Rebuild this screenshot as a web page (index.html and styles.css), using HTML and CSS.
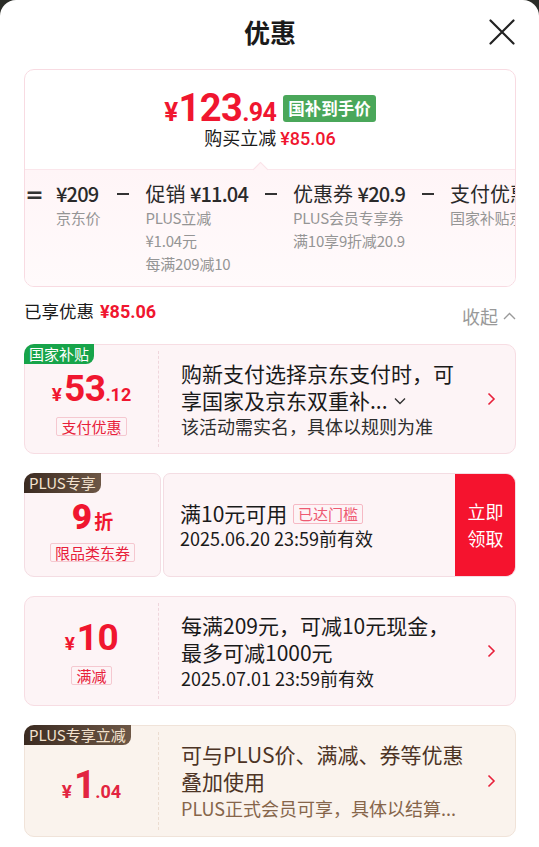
FILE: index.html
```html
<!DOCTYPE html>
<html lang="zh-CN">
<head>
<meta charset="utf-8">
<title>优惠</title>
<link rel="stylesheet" href="styles.css">
</head>
<body>
<div class="sheet">
  <header class="hd">
    <span></span>
    <h1 class="title">优惠</h1>
    <svg class="close" width="26" height="26" viewBox="0 0 26 26"><path d="M1.5 1.5L24.5 24.5M24.5 1.5L1.5 24.5" stroke="#222" stroke-width="2.2" stroke-linecap="round"/></svg>
  </header>

  <section class="summary">
    <div class="sum-top">
      <div class="price-line">
        <span class="price"><span class="p-yen">¥</span><span class="p-int">123</span><span class="p-dec">.94</span></span>
        <span class="gtag">国补到手价</span>
      </div>
      <div class="save">购买立减 <span class="save-amt">¥85.06</span></div>
    </div>
    <div class="sum-bot">
      <span class="notch"></span>
      <div class="calc">
        <span class="op op-eq">=</span>
        <div class="term">
          <div class="t-main"><span class="num">¥209</span></div>
          <div class="t-sub">京东价</div>
        </div>
        <span class="op"><i class="minus"></i></span>
        <div class="term">
          <div class="t-main">促销 <span class="num">¥11.04</span></div>
          <div class="t-sub">PLUS立减</div>
          <div class="t-sub">¥1.04元</div>
          <div class="t-sub">每满209减10</div>
        </div>
        <span class="op"><i class="minus"></i></span>
        <div class="term">
          <div class="t-main">优惠券 <span class="num">¥20.9</span></div>
          <div class="t-sub">PLUS会员专享券</div>
          <div class="t-sub">满10享9折减20.9</div>
        </div>
        <span class="op"><i class="minus"></i></span>
        <div class="term">
          <div class="t-main">支付优惠 <span class="num">¥53.12</span></div>
          <div class="t-sub">国家补贴京东支付</div>
        </div>
      </div>
    </div>
  </section>

  <div class="enjoy">
    <div class="enjoy-l">已享优惠 <span class="enjoy-amt">¥85.06</span></div>
    <div class="enjoy-r">收起 <svg width="13" height="8" viewBox="0 0 13 8"><path d="M1 7L6.5 1.5L12 7" fill="none" stroke="#9a9a9a" stroke-width="1.4"/></svg></div>
  </div>

  <div class="list">
    <div class="card">
      <span class="badge green">国家补贴</span>
      <div class="c-left">
        <div class="amt"><span class="a-yen">¥</span><span class="a-int">53</span><span class="a-dec">.12</span></div>
        <span class="ltag">支付优惠</span>
      </div>
      <div class="c-right">
        <div class="c-text">
          <div class="l-main">购新支付选择京东支付时，可</div>
          <div class="l-main">享国家及京东双重补... <svg class="more" width="12" height="8" viewBox="0 0 12 8"><path d="M1 1.5L6 6.5L11 1.5" fill="none" stroke="#333" stroke-width="1.4"/></svg></div>
          <div class="l-sub">该活动需实名，具体以规则为准</div>
        </div>
        <svg class="chev" width="9" height="14" viewBox="0 0 9 14"><path d="M1.5 1.5L7 7L1.5 12.5" fill="none" stroke="#e8203a" stroke-width="1.6"/></svg>
      </div>
    </div>

    <div class="ticket">
      <div class="t-left">
        <span class="badge plus">PLUS专享</span>
        <div class="amt zhe"><span class="z-int">9</span><span class="z-unit">折</span></div>
        <span class="ltag">限品类东券</span>
      </div>
      <div class="t-right">
        <div class="t-body">
          <div class="l-main">满10元可用 <span class="reach">已达门槛</span></div>
          <div class="l-date">2025.06.20 23:59前有效</div>
        </div>
        <div class="btn">立即<br>领取</div>
      </div>
    </div>

    <div class="card">
      <div class="c-left nobadge">
        <div class="amt"><span class="a-yen">¥</span><span class="a-int">10</span></div>
        <span class="ltag">满减</span>
      </div>
      <div class="c-right">
        <div class="c-text">
          <div class="l-main">每满209元，可减10元现金，</div>
          <div class="l-main">最多可减1000元</div>
          <div class="l-date">2025.07.01 23:59前有效</div>
        </div>
        <svg class="chev" width="9" height="14" viewBox="0 0 9 14"><path d="M1.5 1.5L7 7L1.5 12.5" fill="none" stroke="#e8203a" stroke-width="1.6"/></svg>
      </div>
    </div>

    <div class="card plus-card">
      <span class="badge plus">PLUS专享立减</span>
      <div class="c-left">
        <div class="amt plus-amt"><span class="a-yen">¥</span><span class="a-int">1</span><span class="a-dec">.04</span></div>
      </div>
      <div class="c-right">
        <div class="c-text">
          <div class="l-main">可与PLUS价、满减、券等优惠</div>
          <div class="l-main">叠加使用</div>
          <div class="l-sub">PLUS正式会员可享，具体以结算...</div>
        </div>
        <svg class="chev" width="9" height="14" viewBox="0 0 9 14"><path d="M1.5 1.5L7 7L1.5 12.5" fill="none" stroke="#e8203a" stroke-width="1.6"/></svg>
      </div>
    </div>
  </div>
</div>
</body>
</html>
```

FILE: styles.css
```css
* { box-sizing: border-box; }
html, body { margin: 0; padding: 0; }
body {
  background: #2a2c27;
  font-family: "Noto Sans CJK SC", "Noto Sans", sans-serif;
  color: #1a1a1a;
}
.sheet {
  background: #fff;
  border-radius: 16px 16px 0 0;
  height: 847px;
  padding: 0 23px 0 24px;
  overflow: hidden;
}

/* header */
.hd {
  display: grid;
  grid-template-columns: 1fr auto 1fr;
  align-items: center;
  height: 64px;
}
.title {
  margin: 0;
  font-size: 26px;
  font-weight: 700;
  line-height: 36px;
  color: #1a1a1a;
}
.close { justify-self: end; margin-right: 1px; margin-bottom: 1px; }

/* summary */
.summary {
  margin-top: 5px;
  border: 1px solid #f8dbe2;
  border-radius: 10px;
  overflow: hidden;
}
.sum-top {
  height: 99px;
  padding-top: 18px;
  display: flex;
  flex-direction: column;
  align-items: center;
}
.price-line {
  display: flex;
  align-items: center;
  height: 40px;
  margin-left: 0;
}
.price {
  font-family: Roboto, "Noto Sans", sans-serif;
  font-weight: 700;
  color: #f0162f;
  display: flex;
  align-items: baseline;
  letter-spacing: -0.6px;
}
.p-yen { font-size: 26px; margin-right: 1px; }
.p-int { font-size: 38px; line-height: 40px; }
.p-dec { font-size: 25px; }
.gtag {
  margin-left: 7px;
  background: #4aa75a;
  color: #fff;
  font-size: 16.5px;
  font-weight: 700;
  height: 27px;
  line-height: 27px;
  padding: 0 5px;
  border-radius: 3px;
}
.save {
  margin-top: -2px;
  font-size: 18px;
  line-height: 23px;
  color: #1a1a1a;
}
.save-amt {
  color: #f0162f;
  font-family: Roboto, "Noto Sans", sans-serif;
  font-weight: 500;
  font-size: 18px;
}

.sum-bot {
  position: relative;
  border-top: 1px solid #fbe6eb;
  background: linear-gradient(180deg, #fff5f7 0%, #fffafb 100%);
  height: 117px;
}
.notch {
  position: absolute;
  left: 230px;
  top: -6px;
  width: 11px;
  height: 11px;
  background: #fff5f7;
  border-top: 1px solid #fbe2e8;
  border-left: 1px solid #fbe2e8;
  transform: rotate(45deg);
}
.calc {
  display: flex;
  align-items: flex-start;
  padding: 12px 0 0 4px;
  white-space: nowrap;
}
.op {
  flex: none;
  width: 12px;
  height: 24px;
  display: flex;
  align-items: center;
  justify-content: center;
  margin: 0 16px 0 17px;
  color: #333;
}
.op-eq {
  margin-left: 0;
  width: 11px;
  font-size: 22px;
  font-weight: 700;
  font-family: "DejaVu Sans", sans-serif;
  margin-right: 16px;
}
.minus {
  display: block;
  width: 12px;
  height: 2.4px;
  background: #333;
}
.term { flex: none; }
.t-main {
  font-size: 20px;
  line-height: 24px;
  color: #2a2a2a;
}
.num {
  font-family: "Noto Sans CJK SC", "Noto Sans", sans-serif;
  font-weight: 500;
  font-size: 20px;
  letter-spacing: -0.8px;
}
.t-sub {
  font-size: 15px;
  line-height: 23px;
  color: #959595;
  letter-spacing: -0.2px;
}

/* enjoyed row */
.enjoy {
  display: flex;
  justify-content: space-between;
  align-items: flex-start;
  margin-top: 11px;
  height: 28px;
}
.enjoy-l {
  font-size: 17.5px;
  line-height: 26px;
  color: #1a1a1a;
}
.enjoy-amt {
  color: #f0162f;
  font-family: Roboto, "Noto Sans", sans-serif;
  font-weight: 700;
  font-size: 18px;
  margin-left: 2px;
}
.enjoy-r {
  margin-top: 5px;
  font-size: 18px;
  line-height: 26px;
  color: #999;
  display: flex;
  align-items: center;
  gap: 5px;
}

/* list */
.list {
  display: flex;
  flex-direction: column;
  gap: 19px;
  margin-top: 18px;
}
.card {
  position: relative;
  display: flex;
  height: 110px;
  border: 1px solid #f7dde3;
  border-radius: 10px;
  background: #fdf4f6;
}
.badge {
  position: absolute;
  left: -1px;
  top: -1px;
  height: 20px;
  line-height: 20px;
  padding: 0 5px;
  font-size: 15px;
  color: #fff;
  border-radius: 10px 0 8px 0;
  white-space: nowrap;
}
.badge.green { background: #17a44a; }
.badge.plus {
  background: linear-gradient(90deg, #3b2b21 0%, #6d5746 100%);
  color: #f4e3cf;
}
.c-left {
  flex: none;
  width: 133px;
  display: flex;
  flex-direction: column;
  align-items: center;
  justify-content: center;
  padding-top: 6px;
}
.c-left.nobadge { padding-top: 0; }
.amt {
  display: flex;
  align-items: baseline;
  color: #f0162f;
  font-family: Roboto, "Noto Sans", sans-serif;
  font-weight: 700;
  line-height: 40px;
}
.a-yen { font-size: 19px; margin-right: 2px; }
.a-int { font-size: 37px; letter-spacing: -0.5px; }
.a-dec { font-size: 18px; }
.ltag {
  margin-top: 2px;
  font-size: 15px;
  line-height: 17px;
  color: #e8203a;
  border: 1px solid #f5c8d0;
  border-radius: 2px;
  padding: 0 4px;
}
.c-right {
  flex: 1;
  display: flex;
  align-items: center;
  margin: 6px 0;
  border-left: 1px dashed #efd6dc;
  padding: 0 19px 0 22px;
}
.c-text { flex: 1; }
.l-main {
  font-size: 21px;
  line-height: 27px;
  color: #1a1a1a;
  white-space: nowrap;
}
.more { margin-left: 2px; vertical-align: middle; position: relative; top: -2px; }
.l-sub {
  font-size: 18px;
  line-height: 25px;
  color: #2e2e2e;
  white-space: nowrap;
}
.l-date {
  font-size: 18px;
  line-height: 25px;
  color: #1a1a1a;
  white-space: nowrap;
}
.chev { flex: none; }

/* ticket */
.ticket {
  display: flex;
  gap: 2px;
  height: 104px;
}
.t-left {
  position: relative;
  flex: none;
  width: 137px;
  border: 1px solid #f4dde3;
  border-radius: 10px 7px 7px 10px;
  background: #fdf4f6;
  display: flex;
  flex-direction: column;
  align-items: center;
  justify-content: center;
  padding-top: 12px;
}
.zhe { line-height: 34px; }
.z-int { font-size: 35px; font-weight: 900; }
.z-unit { font-size: 19px; font-weight: 700; font-family: "Noto Sans CJK SC", sans-serif; margin-left: 2px; }
.t-left .ltag { margin-top: 5px; }
.t-right {
  flex: 1;
  display: flex;
  border: 1px solid #f4dde3;
  border-radius: 7px 10px 10px 7px;
  background: #fdf4f6;
  overflow: hidden;
}
.t-body {
  flex: 1;
  padding-left: 16px;
  display: flex;
  flex-direction: column;
  justify-content: center;
}
.t-body .l-main { line-height: 26px; }
.reach {
  display: inline-block;
  vertical-align: 2px;
  font-size: 15px;
  line-height: 18px;
  color: #ee5a72;
  border: 1px solid #f6b9c4;
  border-radius: 2px;
  padding: 0 4px;
  margin-left: 1px;
}
.btn {
  flex: none;
  width: 61px;
  margin: -1px -1px -1px 0;
  background: #f5132e;
  color: #fff;
  font-size: 18px;
  line-height: 27px;
  display: flex;
  align-items: center;
  justify-content: center;
  text-align: center;
}

/* plus card */
.plus-card {
  height: 112px;
  background: #faf3ed;
  border-color: #f0e3d9;
}
.plus-card .c-right { border-left-color: #ebdcd0; }
.plus-card .l-main { color: #4d3425; }
.plus-card .l-sub { color: #86654a; line-height: 27px; }
.plus-card .c-left { padding-top: 14px; }
.plus-amt { color: #e22440; }
.plus-amt .a-int { font-size: 38px; }
```
